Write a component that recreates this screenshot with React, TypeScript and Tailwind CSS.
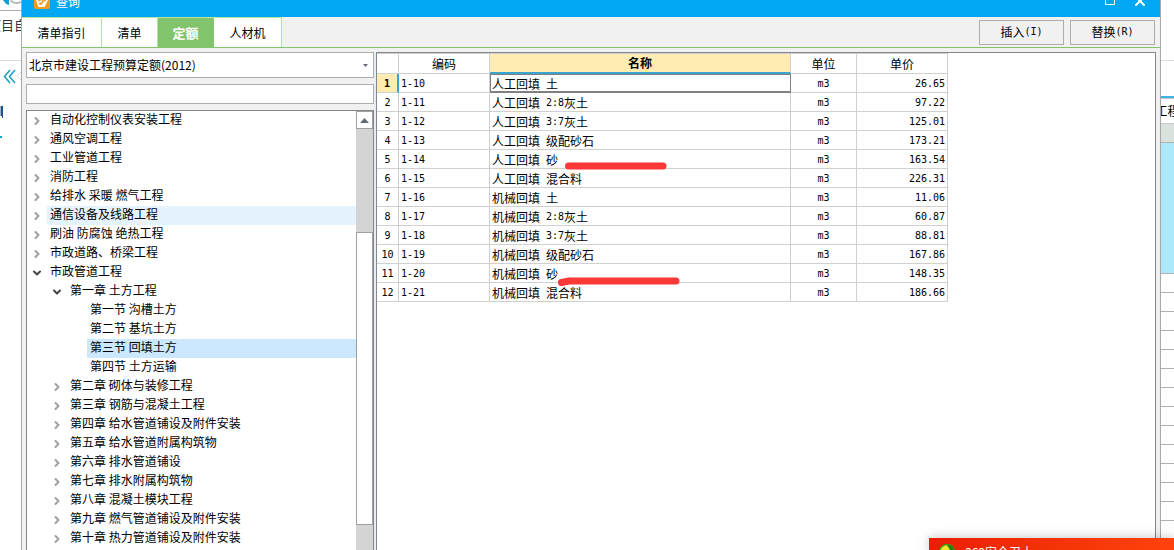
import { ChevronDown, ChevronRight, X } from 'lucide-react';
import clsx from 'clsx';

type TreeItem = {
  label: string;
  level: 0 | 1 | 2;
  state?: 'open' | 'closed';
  hovered?: boolean;
  selected?: boolean;
};

const treeItems: TreeItem[] = [
  { label: '自动化控制仪表安装工程', level: 0, state: 'closed' },
  { label: '通风空调工程', level: 0, state: 'closed' },
  { label: '工业管道工程', level: 0, state: 'closed' },
  { label: '消防工程', level: 0, state: 'closed' },
  { label: '给排水 采暖 燃气工程', level: 0, state: 'closed' },
  { label: '通信设备及线路工程', level: 0, state: 'closed', hovered: true },
  { label: '刷油 防腐蚀 绝热工程', level: 0, state: 'closed' },
  { label: '市政道路、桥梁工程', level: 0, state: 'closed' },
  { label: '市政管道工程', level: 0, state: 'open' },
  { label: '第一章 土方工程', level: 1, state: 'open' },
  { label: '第一节 沟槽土方', level: 2 },
  { label: '第二节 基坑土方', level: 2 },
  { label: '第三节 回填土方', level: 2, selected: true },
  { label: '第四节 土方运输', level: 2 },
  { label: '第二章 砌体与装修工程', level: 1, state: 'closed' },
  { label: '第三章 钢筋与混凝土工程', level: 1, state: 'closed' },
  { label: '第四章 给水管道铺设及附件安装', level: 1, state: 'closed' },
  { label: '第五章 给水管道附属构筑物', level: 1, state: 'closed' },
  { label: '第六章 排水管道铺设', level: 1, state: 'closed' },
  { label: '第七章 排水附属构筑物', level: 1, state: 'closed' },
  { label: '第八章 混凝土模块工程', level: 1, state: 'closed' },
  { label: '第九章 燃气管道铺设及附件安装', level: 1, state: 'closed' },
  { label: '第十章 热力管道铺设及附件安装', level: 1, state: 'closed' },
];

const rows = [
  { code: '1-10', work: '人工回填', ratio: '', material: '土', price: '26.65' },
  { code: '1-11', work: '人工回填', ratio: '2:8', material: '灰土', price: '97.22' },
  { code: '1-12', work: '人工回填', ratio: '3:7', material: '灰土', price: '125.01' },
  { code: '1-13', work: '人工回填', ratio: '', material: '级配砂石', price: '173.21' },
  { code: '1-14', work: '人工回填', ratio: '', material: '砂', price: '163.54' },
  { code: '1-15', work: '人工回填', ratio: '', material: '混合料', price: '226.31' },
  { code: '1-16', work: '机械回填', ratio: '', material: '土', price: '11.06' },
  { code: '1-17', work: '机械回填', ratio: '2:8', material: '灰土', price: '60.87' },
  { code: '1-18', work: '机械回填', ratio: '3:7', material: '灰土', price: '88.81' },
  { code: '1-19', work: '机械回填', ratio: '', material: '级配砂石', price: '167.86' },
  { code: '1-20', work: '机械回填', ratio: '', material: '砂', price: '148.35' },
  { code: '1-21', work: '机械回填', ratio: '', material: '混合料', price: '186.66' },
];

const indents = ['pl-0', 'pl-5', 'pl-10'];

const mono = "font-['DejaVu_Sans_Mono',monospace] text-[10px]";
const cell = 'h-[19px] border-r border-b border-[#d0d0d0] p-0 pt-0.5 leading-4';

function Tab({ label, width, active }: { label: string; width: string; active?: boolean }) {
  return (
    <button
      type="button"
      className={clsx(
        'border-r',
        width,
        active
          ? 'border-[#82c46b] bg-[#82c46b] text-[13px] font-bold text-white'
          : 'border-[#b5e3a2] bg-white'
      )}
    >
      {label}
    </button>
  );
}

function ToolButton({ label, hotkey }: { label: string; hotkey: string }) {
  return (
    <button
      type="button"
      className="flex h-[25px] w-[85px] items-center justify-center border border-[#adadad] bg-[#f1f1f1]"
    >
      {label}
      <span className={mono}>({hotkey})</span>
    </button>
  );
}

function TreeRow({ item }: { item: TreeItem }) {
  return (
    <li className={indents[item.level]}>
      <button type="button" className="flex h-[19px] w-full items-center text-left">
        <span className="flex w-5 shrink-0 justify-center">
          {item.state === 'closed' && <ChevronRight className="size-3 text-[#a0a0a0]" strokeWidth={4} />}
          {item.state === 'open' && <ChevronDown className="size-3 text-[#444]" strokeWidth={4} />}
        </span>
        <span
          className={clsx(
            'h-full flex-1 pl-[3px] leading-4 whitespace-nowrap',
            item.hovered && 'bg-[#e5f3ff]',
            item.selected && 'bg-[#cce8ff]'
          )}
        >
          {item.label}
        </span>
      </button>
    </li>
  );
}

/* Slice of the main window left of the dialog */
function LeftStrip() {
  return (
    <div className="w-[21px] shrink-0 overflow-hidden bg-white">
      <div className="h-[11px] border-b border-[#aaa]">
        <svg width="21" height="10" viewBox="0 0 21 10">
          <path d="M3 0h6v5l-3-1z" fill="#129fd9" />
          <path d="M11 0c1 3 6 4 10 2" fill="none" stroke="#bbb" strokeWidth="2" />
        </svg>
      </div>
      <div className="h-[50px] border-b border-[#ddd] pt-1.5">
        <span className="-ml-3 block text-[13px] leading-4 whitespace-nowrap text-[#333]">项目自</span>
      </div>
      <svg width="21" height="80" viewBox="0 0 21 80">
        <path d="M10 9L4.500 15.500L10 22M15 9L9.500 15.500L15 22" fill="none" stroke="#1a9fc8" strokeWidth="1.500" />
        <path d="M21 11l-4 4 4 4" fill="none" stroke="#ddd" />
        <path d="M0 45h1v10h-1z" fill="#9fb4cf" />
        <path d="M1 45h2v12h-1v-2h-1z" fill="#1d4f8c" />
        <path d="M0 75h2v2h-2z" fill="#00a8d8" />
      </svg>
    </div>
  );
}

/* Slice of the main window right of the dialog */
function RightStrip() {
  return (
    <div className="w-[13px] shrink-0 overflow-hidden bg-white">
      <div className="h-[61px] border-b border-[#ddd]" />
      <div className="h-[37px] border-b-2 border-[#40b4e5]" />
      <div className="flex h-[26px] items-center justify-center border-y border-[#c8c8c8]">
        <span className="shrink-0 whitespace-nowrap">工程</span>
      </div>
      <div className="h-[19px] border-b border-[#b0b0b0] bg-[#d9e2dd]" />
      <div className="h-[131px] border-b border-[#b0b0b0] bg-[#aee8fb]" />
      {Array.from({ length: 15 }, (_, i) => (
        <div key={i} className="h-[19px] border-b border-[#b0b0b0]" />
      ))}
    </div>
  );
}

function TitleBar() {
  return (
    <header className="flex h-[17px] shrink-0 items-end overflow-hidden bg-[#00a8f3] text-white">
      <div className="flex h-8 flex-1 shrink-0 items-center pr-3 pl-3">
        <svg width="16" height="16" viewBox="0 0 16 16">
          <rect width="16" height="16" rx="2" fill="#f59b1c" />
          <path
            d="M3 7l6-4 4 4-3 6H5zM5 9l3-1M8 12l3-3M7 5l3 2"
            fill="#f59b1c"
            stroke="#fff"
            strokeWidth="1.800"
          />
        </svg>
        <h1 className="ml-1.5 flex-1 pt-0.5 text-xs">查询</h1>
        <button type="button" aria-label="最大化" className="mr-4">
          <svg width="12" height="10" viewBox="0 0 12 10">
            <path d="M1.500 0v8.500h9V0" fill="none" stroke="#fff" />
          </svg>
        </button>
        <button type="button" aria-label="关闭">
          <X className="size-4" strokeWidth={3} />
        </button>
      </div>
    </header>
  );
}

function LeftPanel() {
  return (
    <aside className="flex w-[348px] shrink-0 flex-col gap-1.5">
      <div className="relative">
        <select
          aria-label="定额库"
          className="block h-[26px] w-full appearance-none border border-[#adadad] bg-white px-0.5 outline-none"
        >
          <option>北京市建设工程预算定额(2012)</option>
        </select>
        <svg className="pointer-events-none absolute top-3 right-1.5" width="5" height="3" viewBox="0 0 5 3">
          <path d="M0 0h5L2.500 3z" fill="#666a75" />
        </svg>
      </div>
      <input
        type="text"
        aria-label="搜索"
        className="h-5 shrink-0 border border-[#adadad] bg-white px-1 outline-none"
      />
      <div className="flex min-h-0 flex-1 border border-b-0 border-[#828790] bg-white">
        <ul className="flex-1 overflow-hidden">
          {treeItems.map((item) => (
            <TreeRow key={item.label} item={item} />
          ))}
        </ul>
        <div className="w-[17px] shrink-0 overflow-hidden bg-[#d4d4d4]">
          <button
            type="button"
            aria-label="向上滚动"
            className="flex h-[18px] w-full items-center justify-center border border-[#a0a0a0] bg-white"
          >
            <svg width="9" height="5" viewBox="0 0 9 5">
              <path d="M4.500 0L9 5H0z" fill="#666a75" />
            </svg>
          </button>
          <div className="mt-[103px] h-[293px] border border-[#a0a0a0] bg-white" />
        </div>
      </div>
    </aside>
  );
}

function QuotaTable() {
  return (
    <table className="w-[571px] table-fixed border-separate border-spacing-0">
      <colgroup>
        <col className="w-[22px]" />
        <col className="w-[91px]" />
        <col className="w-[301px]" />
        <col className="w-[66px]" />
        <col className="w-[91px]" />
      </colgroup>
      <thead>
        <tr className="h-[21px]">
          <th className="border-t border-r border-b border-[#d0d0d0] p-0" />
          <th className="border-t border-r border-b border-[#d0d0d0] p-0 font-normal">编码</th>
          <th className="border-t border-r border-b-2 border-[#d0d0d0] border-b-[#3ba3d0] bg-[#ffecb3] p-0 font-bold">
            名称
          </th>
          <th className="border-t border-r border-b border-[#d0d0d0] p-0 font-normal">单位</th>
          <th className="border-t border-r border-b border-[#d0d0d0] p-0 font-normal">单价</th>
        </tr>
      </thead>
      <tbody>
        {rows.map((row, i) => (
          <tr key={row.code}>
            <th
              className={clsx(
                cell,
                mono,
                'text-center',
                i === 0 ? 'border-r-2 border-r-[#3ba3d0] bg-[#ffecb3] font-bold' : 'font-normal'
              )}
            >
              {i + 1}
            </th>
            <td className={clsx(cell, mono, 'pl-0.5')}>{row.code}</td>
            <td
              className={clsx(
                cell,
                'pl-0.5',
                i === 0 && 'border-[#808080]! shadow-[inset_1px_1px_0_#808080,inset_0_-1px_0_#808080]'
              )}
            >
              <div className="flex">
                <span className="mr-1.5">{row.work}</span>
                {row.ratio && <span className={mono}>{row.ratio}</span>}
                <span>{row.material}</span>
              </div>
            </td>
            <td className={clsx(cell, mono, 'text-center')}>m3</td>
            <td className={clsx(cell, mono, 'pr-0.5 text-right')}>{row.price}</td>
          </tr>
        ))}
      </tbody>
    </table>
  );
}

export default function App() {
  return (
    <div className="relative flex h-screen overflow-hidden bg-white font-['Noto_Sans_CJK_SC',sans-serif] text-xs text-black">
      <LeftStrip />

      <div className="flex min-w-0 flex-1 flex-col border-x border-[#a8a8a8] bg-[#f1f1f1]">
        <TitleBar />

        <nav className="flex h-[31px] shrink-0 justify-between border-b border-[#82c46b]">
          <div className="flex border-t border-[#b5e3a2]">
            <Tab label="清单指引" width="w-20" />
            <Tab label="清单" width="w-14" />
            <Tab label="定额" width="w-14" active />
            <Tab label="人材机" width="w-[68px]" />
          </div>
          <div className="flex items-center gap-1.5 pr-[5px]">
            <ToolButton label="插入" hotkey="I" />
            <ToolButton label="替换" hotkey="R" />
          </div>
        </nav>

        <main className="flex min-h-0 flex-1 px-1 pt-1">
          <LeftPanel />
          <div className="w-0.5 shrink-0 bg-[#e4eef5]" />
          <section className="relative min-w-0 flex-1 overflow-hidden border border-b-0 border-[#828790] bg-white">
            <QuotaTable />
            {/* Hand-drawn red marks */}
            <svg
              className="pointer-events-none absolute top-[105px] left-[180px]"
              width="126"
              height="132"
              viewBox="0 0 126 132"
              fill="none"
              stroke="#fc3838"
              strokeWidth="7"
              strokeLinecap="round"
              strokeLinejoin="round"
            >
              <path d="M11.500 8H106" />
              <path d="M4.500 124.500L12 123H119" />
            </svg>
          </section>
        </main>
      </div>

      <RightStrip />

      <div className="absolute right-0 bottom-0 h-3 w-[245px] overflow-hidden bg-linear-to-r from-[#ea1d00] to-[#ff420d] shadow-[0_0_12px_rgba(0,0,0,0.25)]">
        <div className="flex items-start gap-2.5 pt-1.5 pl-2.5 text-white">
          <svg width="16" height="16" viewBox="0 0 16 16">
            <circle cx="8" cy="8" r="7.500" fill="#f5e62c" stroke="#3f9a17" strokeWidth="1.500" />
            <path d="M8 1c5 0 7 3 7 7l-4-2z" fill="#2c7d10" />
          </svg>
          <span className="leading-4">360安全卫士</span>
        </div>
      </div>
    </div>
  );
}
